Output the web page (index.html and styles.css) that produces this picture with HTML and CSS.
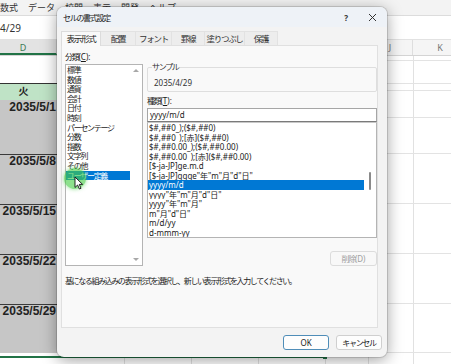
FILE: index.html
```html
<!DOCTYPE html>
<html lang="ja">
<head>
  <meta charset="utf-8">
  <link rel="stylesheet" href="styles.css">
</head>
<body>
  <div class="sheet">
    <div class="menu">
      <span>数式</span><span>データ</span><span>校閲</span><span>表示</span><span>開発</span><span>ヘルプ</span>
    </div>
    <div class="fbar">4/29</div>
    <div class="gap"></div>
    <div class="colheads">
      <div class="ch ch-d">D</div>
      <div class="ch"></div>
      <div class="ch"></div>
      <div class="ch"></div>
      <div class="ch"></div>
      <div class="ch ch-i"></div>
      <div class="ch ch-j">J</div>
      <div class="ch ch-k">K</div>
    </div>
    <div class="cells">
      <div class="col-d">
        <div class="c-blank"></div>
        <div class="c-day">火</div>
        <div class="c-date first">2035/5/1</div>
        <div class="c-date">2035/5/8</div>
        <div class="c-date">2035/5/15</div>
        <div class="c-date">2035/5/22</div>
        <div class="c-date last">2035/5/29</div>
      </div>
      <div class="col-rest">
        <div class="r h5"></div>
        <div class="r h23"></div>
        <div class="r h7"></div>
        <div class="r h27"></div>
        <div class="r h36"></div>
        <div class="r h50"></div>
        <div class="r h50"></div>
        <div class="r h50"></div>
        <div class="r h49"></div>
        <div class="r h20"></div>
      </div>
    </div>
  </div>
  <div class="sel"></div>

  <div class="dlg">
    <div class="titlebar">
      <span class="jp">セルの書式設定</span>
      <span class="help">?</span>
      <svg class="close" width="9" height="9" viewBox="0 0 9 9"><path d="M1 1L8 8M8 1L1 8" stroke="#333" stroke-width="1"/></svg>
    </div>
    <div class="tabs">
      <div class="tab on jp">表示形式</div>
      <div class="tab jp w35">配置</div>
      <div class="tab jp w36">フォント</div>
      <div class="tab jp w33">罫線</div>
      <div class="tab jp w40">塗りつぶし</div>
      <div class="tab jp w33">保護</div>
    </div>
    <div class="panel">
      <div class="pgrid">
        <div class="left">
          <div class="lbl"><span class="jp">分類</span>(<u>C</u>):</div>
          <div class="catlist">
            <div class="items jp">
              <div class="it">標準</div>
              <div class="it">数値</div>
              <div class="it">通貨</div>
              <div class="it">会計</div>
              <div class="it">日付</div>
              <div class="it">時刻</div>
              <div class="it">パーセンテージ</div>
              <div class="it">分数</div>
              <div class="it">指数</div>
              <div class="it">文字列</div>
              <div class="it">その他</div>
              <div class="it on">ユーザー定義</div>
            </div>
            <div class="vscroll">
              <span class="arr up"></span>
              <span class="arr down"></span>
            </div>
          </div>
        </div>
        <div class="right">
          <fieldset class="sample">
            <legend class="jp">サンプル</legend>
            <div class="sval">2035/4/29</div>
          </fieldset>
          <div class="lbl kind"><span class="jp">種類</span>(<u>T</u>):</div>
          <div class="input">yyyy/m/d</div>
          <div class="fmtlist">
            <div class="items">
              <div class="it">$#,##0_);($#,##0)</div>
              <div class="it">$#,##0_);[赤]($#,##0)</div>
              <div class="it">$#,##0.00_);($#,##0.00)</div>
              <div class="it">$#,##0.00_);[赤]($#,##0.00)</div>
              <div class="it">[$-ja-JP]ge.m.d</div>
              <div class="it">[$-ja-JP]ggge"年"m"月"d"日"</div>
              <div class="it on">yyyy/m/d</div>
              <div class="it">yyyy"年"m"月"d"日"</div>
              <div class="it">yyyy"年"m"月"</div>
              <div class="it">m"月"d"日"</div>
              <div class="it">m/d/yy</div>
              <div class="it">d-mmm-yy</div>
            </div>
            <div class="vscroll">
              <span class="thumb"></span>
            </div>
          </div>
          <button class="btn del"><span class="jp">削除</span>(D)</button>
        </div>
      </div>
      <p class="desc jp">基になる組み込みの表示形式を選択し、新しい表示形式を入力してください。</p>
    </div>
    <div class="footer">
      <button class="btn ok">OK</button>
      <button class="btn jp">キャンセル</button>
    </div>
  </div>

  <div class="spot"></div>
  <svg class="cursor" width="10" height="14" viewBox="0 0 10 14"><path d="M1 1L1 11.5L3.6 9L5.4 13L7 12.3L5.3 8.4L8.6 8.4Z" fill="#fff" stroke="#111" stroke-width="0.9" stroke-linejoin="round"/></svg>
</body>
</html>
```

FILE: styles.css
```css
* { box-sizing: border-box; }

body {
  margin: 0;
  width: 451px;
  height: 364px;
  overflow: hidden;
  position: relative;
  background: #fff;
  font-family: "Noto Sans", "Noto Sans CJK JP", sans-serif;
  color: #1f1f1f;
}

/* spreadsheet behind the dialog */
.sheet { display: flex; flex-direction: column; height: 364px; }

.menu {
  height: 17px;
  background: #f3f3f3;
  border-bottom: 1px solid #dcdcdc;
  display: flex;
  font-size: 9px;
  line-height: 15px;
  color: #333;
}
.menu span { margin-right: 10px; }

.fbar {
  height: 24px;
  background: #fff;
  border-bottom: 1px solid #e2e2e2;
  font-size: 10px;
  line-height: 24px;
  color: #333;
}
.gap { height: 3px; background: #f5f5f5; }

.colheads {
  height: 16px;
  display: flex;
  margin-left: -10px;
  background: #f5f5f5;
  border-bottom: 1px solid #d4d4d4;
  font-size: 9px;
  line-height: 15px;
  color: #777;
  text-align: center;
}
.ch { width: 67px; flex: none; border-right: 1px solid #dedede; }
.ch-i { width: 43px; }
.ch-j { width: 45px; }
.ch-k { width: 55px; }
.ch-d { background: #e3e3e3; color: #3c7a54; border-bottom: 2px solid #217346; }

.cells { flex: 1; display: flex; margin-left: -10px; }

.col-d { width: 67px; flex: none; display: flex; flex-direction: column; }
.c-blank { height: 28px; background: #fff; border-bottom: 1px solid #333; }
.c-day {
  height: 16px;
  background: #bfe3c6;
  text-align: center;
  font-size: 10px;
  font-weight: bold;
  line-height: 15px;
  color: #222;
}
.c-date {
  height: 50px;
  background: #c6c6c6;
  border-top: 1px solid #3a3a3a;
  text-align: right;
  padding-right: 1px;
  font-family: "Liberation Sans", sans-serif;
  font-weight: bold;
  font-size: 12px;
  line-height: 13px;
  color: #222;
}
.c-date.first { height: 54px; border-top: none; padding-top: 1px; }
.c-date.last { height: 49px; }

.col-rest {
  flex: 1;
  background: linear-gradient(to right,
    transparent 67px, #e1e1e1 67px, #e1e1e1 68px,
    transparent 68px, transparent 134px, #e1e1e1 134px, #e1e1e1 135px,
    transparent 135px, transparent 201px, #e1e1e1 201px, #e1e1e1 202px,
    transparent 202px, transparent 268px, #e1e1e1 268px, #e1e1e1 269px,
    transparent 269px, transparent 311px, #e1e1e1 311px, #e1e1e1 312px,
    transparent 312px, transparent 356px, #e1e1e1 356px, #e1e1e1 357px,
    transparent 357px);
}
.r { border-bottom: 1px solid #e3e3e3; }
.h5 { height: 5px; }
.h7 { height: 7px; }
.h20 { height: 20px; }
.h23 { height: 23px; }
.h27 { height: 27px; }
.h36 { height: 36px; }
.h49 { height: 49px; }
.h50 { height: 50px; }

/* selection outline bottom edge */
.sel {
  position: absolute;
  left: 0;
  top: 356px;
  width: 325px;
  height: 2px;
  background: #217346;
}
.sel::after {
  content: "";
  position: absolute;
  right: -2px;
  top: -1px;
  width: 4px;
  height: 4px;
  background: #217346;
}

/* format cells dialog */
.dlg {
  position: absolute;
  left: 57px;
  top: 7px;
  width: 330px;
  height: 350px;
  background: #f3f3f3;
  border-radius: 7px;
  box-shadow: 0 0 0 1px rgba(0,0,0,0.13), 0 3px 16px rgba(0,0,0,0.38);
  display: flex;
  flex-direction: column;
  overflow: hidden;
  font-size: 8px;
  color: #1a1a1a;
}
.jp { letter-spacing: -1.3px; }

.titlebar {
  height: 20px;
  flex: none;
  background: #eef2f7;
  display: flex;
  align-items: center;
  padding: 0 10px 0 6px;
  font-size: 8px;
  color: #222;
}
.help { margin-left: auto; margin-right: 20px; font-size: 8px; font-weight: bold; color: #333; }
.close { display: block; }

.tabs { display: flex; height: 14px; margin: 4px 0 0 4px; flex: none; }
.tab {
  width: 40px;
  height: 14px;
  text-align: center;
  line-height: 13px;
  font-size: 8.5px;
  background: #ededed;
  border: 1px solid #e2e2e2;
  border-bottom: none;
  border-left: none;
  color: #333;
}
.tab.on {
  background: #f9f9f9;
  border: 1px solid #dcdcdc;
  border-bottom: none;
  height: 15px;
  position: relative;
  z-index: 1;
  color: #1a1a1a;
}
.w33 { width: 33px; }
.w35 { width: 35px; }
.w36 { width: 36px; }
.w40 { width: 40px; }

.panel {
  height: 283px;
  flex: none;
  margin: 0 9px 0 4px;
  background: #f9f9f9;
  border: 1px solid #e0e0e0;
  padding: 6px 0 0 3px;
}
.pgrid { display: grid; grid-template-columns: 78px 230px; column-gap: 4px; align-items: start; }

.lbl { height: 10px; line-height: 10px; margin-bottom: 2px; }
.lbl.kind { margin: 4px 0 2px; }

.catlist {
  height: 202px;
  display: flex;
  background: #fff;
  border: 1px solid #b4b4b4;
}
.items { flex: 1; line-height: 9.6px; }
.it { height: 9.6px; padding-left: 1px; white-space: nowrap; overflow: hidden; }
.it.on { background: #0078d4; color: #fff; }
.catlist .items { width: 64px; flex: none; }

.vscroll {
  width: 12px;
  flex: none;
  display: flex;
  flex-direction: column;
  justify-content: space-between;
  align-items: center;
  padding: 4px 0;
}
.arr { width: 0; height: 0; border-left: 3px solid transparent; border-right: 3px solid transparent; }
.arr.up { border-bottom: 3px solid #a8a8a8; }
.arr.down { border-top: 3px solid #a8a8a8; }

.right { padding-top: 10px; display: flex; flex-direction: column; }

.sample {
  margin: 0;
  padding: 0 4px 3px;
  height: 30px;
  border: 1px solid #dedede;
  border-radius: 2px;
  min-width: 0;
}
.sample legend { padding: 0; line-height: 10px; font-size: 8px; color: #333; }
.sval { margin: 6px 0 0 2px; line-height: 10px; color: #333; }

.input {
  height: 14px;
  background: #fff;
  border: 1px solid #a6a6a6;
  border-bottom-color: #7a7a7a;
  padding-left: 2px;
  line-height: 12px;
}

.fmtlist {
  height: 116px;
  display: flex;
  background: #fff;
  border: 1px solid #b4b4b4;
  border-top: 1px solid #c8c8c8;
}
.fmtlist .items { line-height: 9.5px; }
.fmtlist .it { height: 9.5px; }
.fmtlist .vscroll { justify-content: flex-start; padding: 0; }
.thumb { width: 2px; height: 18px; margin-top: 49px; background: #8a8a8a; border-radius: 1px; }

.btn {
  width: 46px;
  height: 15px;
  padding: 0;
  font-family: inherit;
  font-size: 8px;
  line-height: 13px;
  background: #fdfdfd;
  border: 1px solid #cfcfcf;
  border-radius: 3px;
  color: #1a1a1a;
}
.btn.del {
  width: 47px;
  margin-top: 13px;
  align-self: flex-end;
  background: #f8f8f8;
  border-color: #dcdcdc;
  color: #a0a0a0;
}
.btn.ok { border-color: #4f8db8; }

.desc { margin: 10px 0 0; line-height: 10px; letter-spacing: -1.4px; color: #222; }

.footer { flex: 1; display: flex; justify-content: flex-end; gap: 7px; padding: 7px 5px 0 0; }

/* pointer highlight */
.spot {
  position: absolute;
  left: 64px;
  top: 168px;
  width: 22px;
  height: 21px;
  border-radius: 50%;
  background: rgba(70, 205, 70, 0.62);
  box-shadow: 0 0 4px rgba(70, 205, 70, 0.6);
}
.cursor { position: absolute; left: 74px; top: 176px; }
```
